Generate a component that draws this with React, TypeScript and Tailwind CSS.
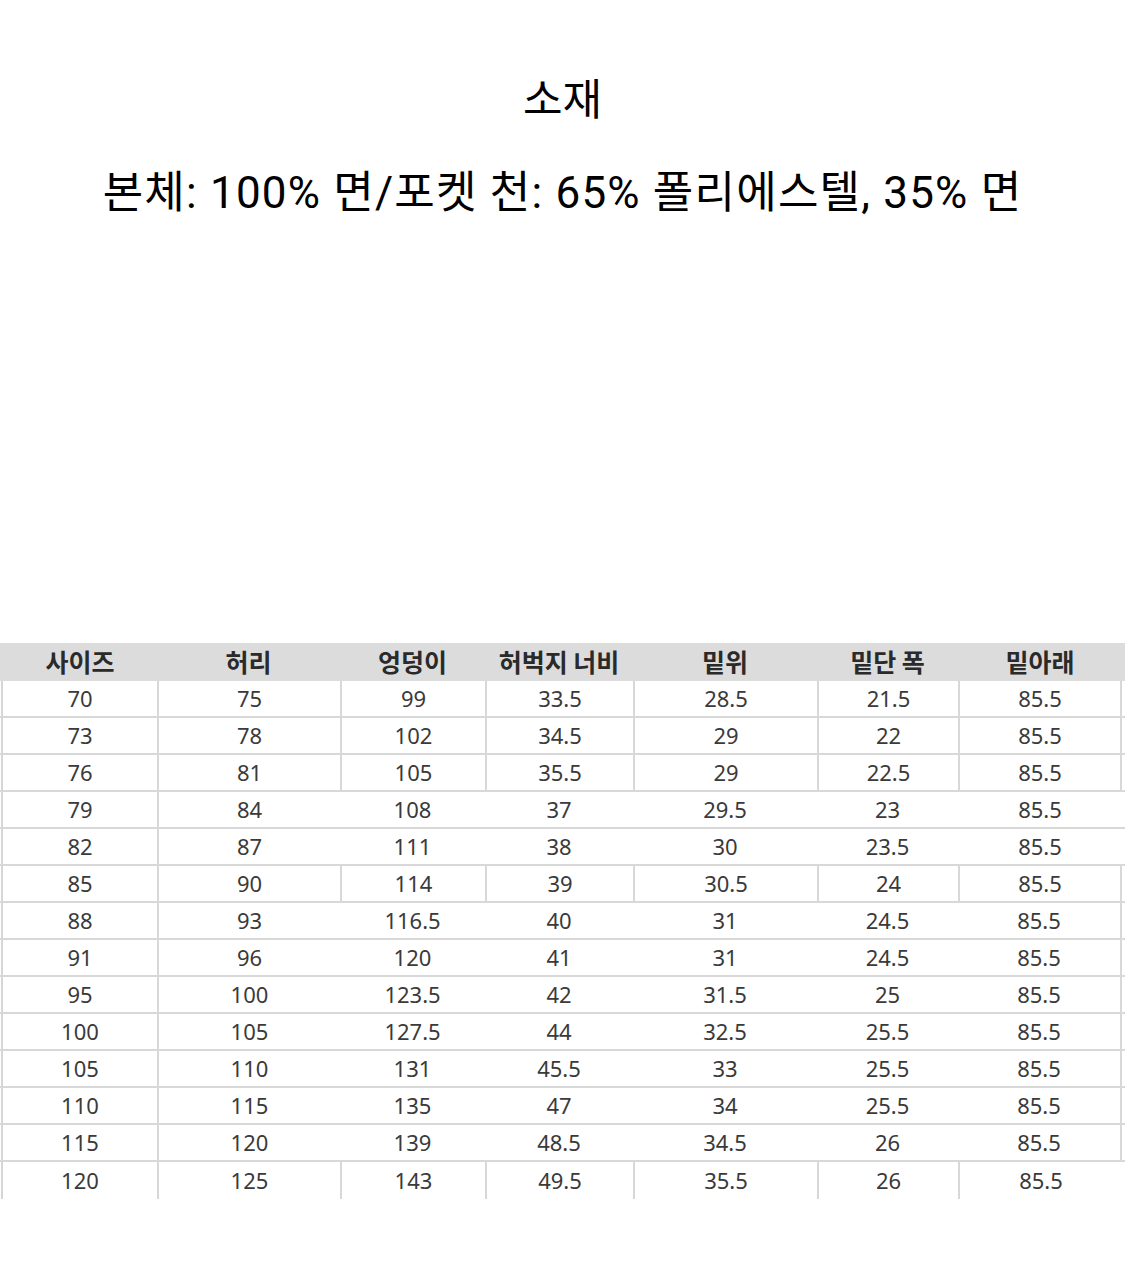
import React from 'react';

const headers = ['사이즈', '허리', '엉덩이', '허벅지 너비', '밑위', '밑단 폭', '밑아래'];

const widths = ['w-[154px]', 'w-[183px]', 'w-[145px]', 'w-[148px]', 'w-[184px]', 'w-[141px]', 'w-[164px]'];

// border style per row: all = every divider, first = only the first column divider
const rows: { v: string[]; lines: 'all' | 'first' | 'firstOpen' | 'last' }[] = [
  { v: ['70', '75', '99', '33.5', '28.5', '21.5', '85.5'], lines: 'all' },
  { v: ['73', '78', '102', '34.5', '29', '22', '85.5'], lines: 'all' },
  { v: ['76', '81', '105', '35.5', '29', '22.5', '85.5'], lines: 'all' },
  { v: ['79', '84', '108', '37', '29.5', '23', '85.5'], lines: 'firstOpen' },
  { v: ['82', '87', '111', '38', '30', '23.5', '85.5'], lines: 'firstOpen' },
  { v: ['85', '90', '114', '39', '30.5', '24', '85.5'], lines: 'all' },
  { v: ['88', '93', '116.5', '40', '31', '24.5', '85.5'], lines: 'first' },
  { v: ['91', '96', '120', '41', '31', '24.5', '85.5'], lines: 'first' },
  { v: ['95', '100', '123.5', '42', '31.5', '25', '85.5'], lines: 'first' },
  { v: ['100', '105', '127.5', '44', '32.5', '25.5', '85.5'], lines: 'first' },
  { v: ['105', '110', '131', '45.5', '33', '25.5', '85.5'], lines: 'first' },
  { v: ['110', '115', '135', '47', '34', '25.5', '85.5'], lines: 'first' },
  { v: ['115', '120', '139', '48.5', '34.5', '26', '85.5'], lines: 'first' },
  { v: ['120', '125', '143', '49.5', '35.5', '26', '85.5'], lines: 'last' },
];

const SizeTable = () => {
  return (
    <div className="w-full font-['Noto_Sans','Noto_Sans_CJK_KR',sans-serif]">
      {/* Header */}
      <div className="flex h-[38px] bg-[#dcdcdc] pl-[3px]">
        {headers.map((h, i) => (
          <div
            key={h}
            className={`${widths[i]} flex items-center justify-center pb-[1px] text-[25px] font-bold text-[#2a2a2a] font-['Noto_Sans_CJK_KR',sans-serif]`}
          >
            {h}
          </div>
        ))}
      </div>

      {/* Body */}
      {rows.map((r) => (
        <div
          key={r.v[0]}
          className={`flex h-[37px] ${r.lines === 'last' ? '' : 'border-b-2 border-[#d8d8d8]'}`}
        >
          <div className="w-[2px] ml-[1px] bg-[#d6d6d6]" />
          {r.v.map((val, i) => {
            const divider =
              i > 0 && (r.lines === 'all' || r.lines === 'last' || i === 1);
            return (
              <div
                key={i}
                className={`${widths[i]} flex items-center justify-center text-[22px] text-[#3a3a3a] ${
                  divider ? 'border-l-2 border-[#d8d8d8]' : ''
                } ${
                  i === 6 && (r.lines === 'all' || r.lines === 'first') ? 'border-r-2 border-[#d8d8d8]' : ''
                }`}
              >
                {val}
              </div>
            );
          })}
        </div>
      ))}
    </div>
  );
};

const App = () => {
  return (
    <div className="w-[1125px] h-[1267px] bg-white font-['Roboto','Noto_Sans_CJK_KR',sans-serif] text-black">
      <div className="h-[643px] pt-[74px] text-center">
        <h2 className="text-[43px] leading-[52px] font-normal">소재</h2>
        <p className="mt-[40px] text-[44px] leading-[54px] tracking-[1.2px]">
          본체: 100% 면/포켓 천: 65% 폴리에스텔, 35% 면
        </p>
      </div>

      <SizeTable />
    </div>
  );
};

export default App;
